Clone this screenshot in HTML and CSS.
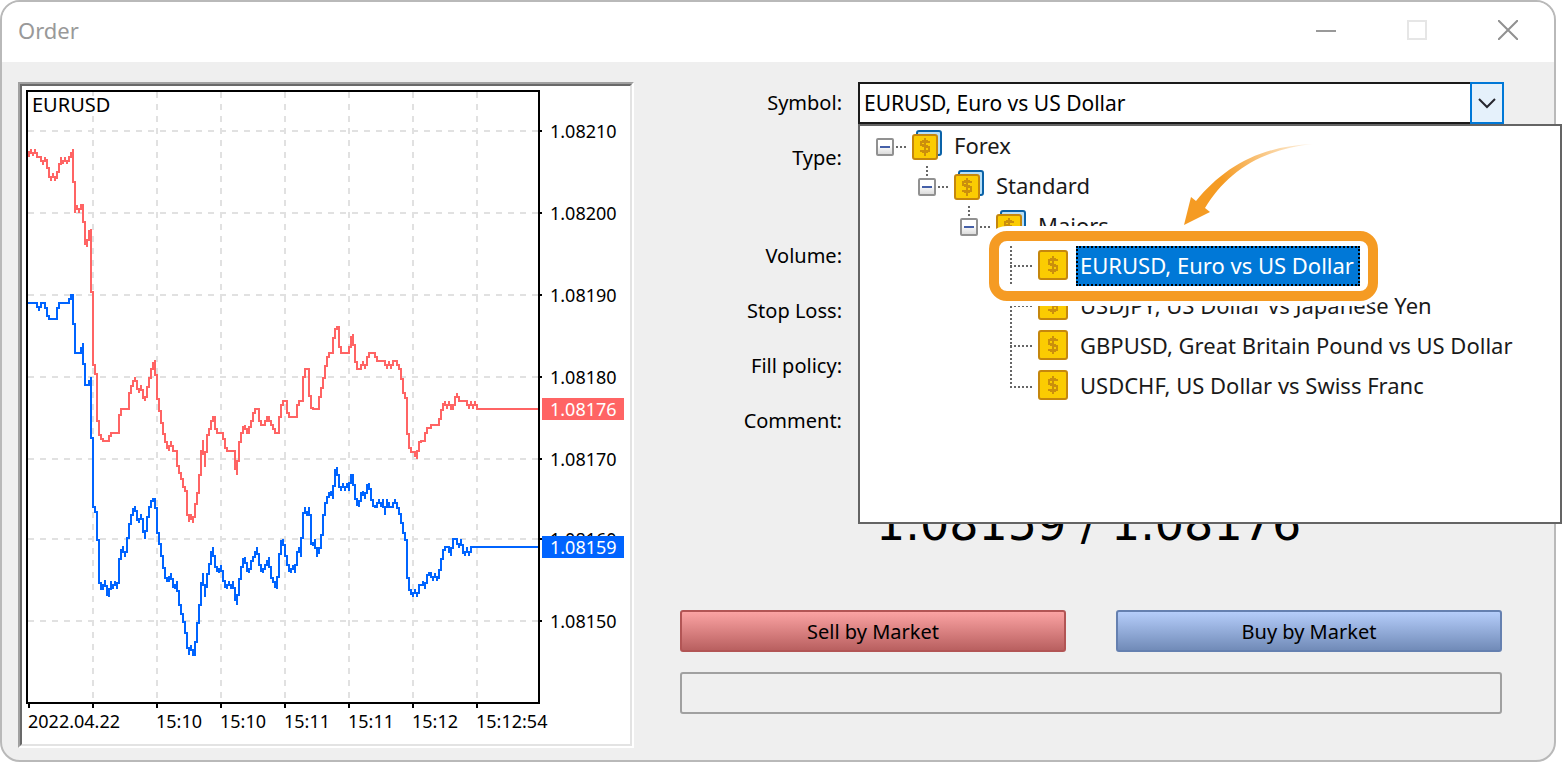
FILE: index.html
```html
<!DOCTYPE html>
<html lang="en">
<head>
<meta charset="utf-8">
<title>Order</title>
<link rel="stylesheet" href="styles.css">
</head>
<body>
<svg class="defs" aria-hidden="true">
  <defs>
    <g id="coin">
      <rect x="1" y="1" width="28" height="28" rx="2" fill="#fbcc02" stroke="#c5870d" stroke-width="2"/>
      <path d="M15 6v18M19 11v-1h-2v-1h-4v1h-2v4h2v1h4v1h2v4h-2v1h-4v-1h-2v-1" fill="none" stroke="#cb8f0c" stroke-width="2"/>
    </g>
    <g id="folder">
      <rect x="5" y="1" width="24" height="24" rx="2" fill="#b8e0f8" stroke="#0a62a8" stroke-width="2"/>
      <rect x="1" y="5" width="24" height="24" rx="2" fill="#fbcc02" stroke="#c5870d" stroke-width="2"/>
      <path d="M13 8v18M17 13v-1h-2v-1h-4v1h-2v3h2v1h4v1h2v4h-2v1h-4v-1h-2v-1" fill="none" stroke="#cb8f0c" stroke-width="2"/>
    </g>
  </defs>
</svg>
<main class="window">
  <header class="titlebar">
    <h1 class="title">Order</h1>
    <div class="window-buttons">
      <button class="window-button" aria-label="Minimize"><svg width="20" height="20"><path d="M0 11h20" stroke="#999" stroke-width="2"/></svg></button>
      <button class="window-button" aria-label="Maximize" disabled><svg width="20" height="20"><rect x="1" y="1" width="18" height="18" fill="none" stroke="#e6e6e6" stroke-width="2"/></svg></button>
      <button class="window-button" aria-label="Close"><svg width="20" height="20"><path d="M0 0l20 20M20 0L0 20" stroke="#919191" stroke-width="2"/></svg></button>
    </div>
  </header>
  <div class="content">
    <section class="chart-panel" aria-label="Tick chart">
      <svg class="chart" viewBox="22 86 608 658">
        <g class="grid">
          <path d="M93 92V702M157 92V702M221 92V702M285 92V702M349 92V702M413 92V702M477 92V702"/>
          <path d="M28 131H538M28 213H538M28 295H538M28 377H538M28 459H538M28 539H538M28 621H538"/>
        </g>
        <rect class="title-back" x="30" y="96" width="82" height="18"/>
        <path class="ask" data-ticks="28,156 29,155 31,149 33,156 35,149 37,156 39,157 41,157 43,165 45,157 47,162 49,173 51,181 53,173 55,181 57,174 59,170 61,157 63,164 65,157 67,164 69,158 71,156 73,149 73,181 75,183 75,213 77,205 79,213 81,205 83,205 83,221 85,223 85,241 87,247 89,233 91,229 91,291 93,293 93,357 95,373 97,375 97,409 99,432 101,437 103,441 109,441 109,439 111,433 119,433 119,421 121,409 129,409 129,399 131,387 133,384 135,377 137,385 139,393 141,385 143,395 145,401 147,392 149,382 151,373 153,365 155,360 155,373 157,376 157,393 159,405 161,417 163,429 165,438 167,445 169,451 171,441 173,450 177,451 177,460 179,471 181,474 183,484 185,490 187,492 187,507 189,522 191,514 193,523 195,510 197,498 199,487 201,462 203,440 205,467 207,436 209,433 211,425 213,417 215,417 215,424 217,433 223,433 225,445 227,451 235,451 235,463 237,475 239,447 241,436 243,429 245,425 247,433 249,433 249,429 251,425 253,417 255,409 259,409 259,417 261,425 265,425 267,417 269,417 271,424 273,425 275,433 279,433 279,425 281,408 283,401 287,401 287,409 289,417 297,417 297,409 299,401 303,401 303,384 305,369 309,369 309,386 311,406 313,409 319,409 319,400 321,393 323,383 325,372 327,360 329,353 333,353 333,344 335,331 337,327 339,327 339,340 341,353 349,353 351,340 353,334 355,355 357,369 361,369 363,361 365,369 367,361 369,353 375,353 377,361 385,361 387,369 389,361 391,369 393,361 397,361 399,368 401,370 403,388 405,397 407,399 407,422 409,445 411,451 415,452 417,459 419,443 421,441 425,441 425,435 427,431 431,425 439,425 441,413 443,406 445,401 447,409 449,401 451,409 453,409 455,400 457,393 459,401 467,401 469,409 471,401 473,409 475,401 477,409 539,409"/>
        <path class="bid" data-ticks="28,303 37,303 39,311 41,303 45,303 47,313 49,319 57,319 57,312 59,303 69,303 71,295 73,295 73,323 75,325 75,353 81,353 83,343 83,363 85,365 85,385 89,385 91,377 91,437 93,439 93,503 95,511 97,513 97,539 99,541 99,577 101,589 103,589 105,580 107,592 109,597 111,581 113,589 115,581 117,589 119,576 119,564 121,554 123,546 125,557 127,546 129,529 131,518 133,511 135,506 137,516 139,523 141,514 143,524 145,539 147,523 149,510 151,503 153,499 155,499 155,507 157,509 157,527 159,538 161,550 163,562 165,574 167,581 169,581 171,573 173,585 175,589 177,581 179,600 181,610 183,618 185,625 187,640 189,655 191,645 193,655 195,655 197,628 199,617 201,593 203,573 205,597 207,577 209,571 211,557 213,547 215,564 217,569 219,573 221,565 223,577 225,585 227,589 229,581 231,589 233,581 235,595 237,605 239,585 241,572 243,561 245,557 247,568 249,573 251,564 253,557 255,556 257,547 259,560 261,569 263,573 265,565 267,564 269,557 271,576 273,580 275,584 277,589 279,565 281,543 283,539 285,550 287,561 289,569 291,573 293,565 295,573 297,557 299,547 301,557 303,518 305,507 307,516 309,507 311,523 311,542 313,546 315,539 317,557 319,548 321,547 323,523 325,507 327,499 329,495 331,491 333,499 335,472 337,467 339,482 341,491 343,483 345,491 347,483 349,491 351,475 353,475 355,495 357,503 359,507 361,495 363,491 365,499 367,487 369,483 371,495 373,505 375,507 377,507 379,499 381,507 383,499 385,515 387,499 389,507 393,507 395,499 397,507 399,508 401,519 403,527 405,539 407,541 407,567 409,589 411,590 413,597 415,589 417,597 419,589 423,581 425,589 427,577 429,573 431,573 433,581 435,573 437,581 439,574 441,565 443,553 445,547 449,547 451,556 453,539 457,539 459,548 461,539 463,550 465,556 467,547 469,556 471,547 539,547"/>
        <path class="axis" d="M27 91H539V703H27ZM29 703v5M93 703v5M157 703v5M221 703v5M285 703v5M349 703v5M413 703v5M477 703v5M539 131h3M539 213h3M539 295h3M539 377h3M539 459h3M539 539h3M539 621h3"/>
        <g class="chart-text">
          <text class="chart-title" x="32" y="112">EURUSD</text>
          <text x="550" y="138">1.08210</text>
          <text x="550" y="220">1.08200</text>
          <text x="550" y="302">1.08190</text>
          <text x="550" y="384">1.08180</text>
          <text x="550" y="466">1.08170</text>
          <text x="550" y="546">1.08160</text>
          <text x="550" y="628">1.08150</text>
          <text x="28" y="728">2022.04.22</text>
          <text x="156" y="728">15:10</text>
          <text x="220" y="728">15:10</text>
          <text x="284" y="728">15:11</text>
          <text x="348" y="728">15:11</text>
          <text x="412" y="728">15:12</text>
          <text x="476" y="728">15:12:54</text>
          <rect class="ask-tag" x="542" y="398" width="82" height="22"/>
          <text class="tag-text" x="550" y="416">1.08176</text>
          <rect class="bid-tag" x="542" y="536" width="82" height="22"/>
          <text class="tag-text" x="550" y="554">1.08159</text>
        </g>
      </svg>
    </section>
    <form class="order-form">
      <div class="fields">
        <div class="field">
          <label for="symbol">Symbol:</label>
          <div class="combo">
            <select id="symbol"><option>EURUSD, Euro vs US Dollar</option></select>
            <span class="combo-arrow"><svg width="18" height="12" viewBox="0 0 18 12"><path d="M1 2l8 8 8-8" fill="none" stroke="#26262e" stroke-width="2"/></svg></span>
          </div>
        </div>
        <div class="field field-type"><label for="type">Type:</label><select id="type"></select></div>
        <div class="field field-volume"><label for="volume">Volume:</label><input id="volume" type="text"></div>
        <div class="field"><label for="stop">Stop Loss:</label><input id="stop" type="text"></div>
        <div class="field"><label for="fill">Fill policy:</label><select id="fill"></select></div>
        <div class="field"><label for="comment">Comment:</label><input id="comment" type="text"></div>
      </div>
      <div class="quote">1.08159 / 1.08176</div>
      <div class="actions">
        <button type="button" class="trade sell">Sell by Market</button>
        <button type="button" class="trade buy">Buy by Market</button>
      </div>
      <div class="status"></div>
    </form>
  </div>
</main>
<div class="popup">
  <ul class="tree">
    <li>
      <div class="node"><span class="toggle"></span><span class="link"></span><svg class="icon"><use href="#folder"/></svg><span class="name">Forex</span></div>
      <ul>
        <li>
          <div class="node child"><span class="toggle"></span><span class="link"></span><svg class="icon"><use href="#folder"/></svg><span class="name">Standard</span></div>
          <ul>
            <li>
              <div class="node child"><span class="toggle"></span><span class="link"></span><svg class="icon"><use href="#folder"/></svg><span class="name">Majors</span></div>
              <ul class="leaves">
                <li class="leaf current"><span class="branch"></span><svg class="icon"><use href="#coin"/></svg><span class="name">EURUSD, Euro vs US Dollar</span></li>
                <li class="leaf"><span class="branch"></span><svg class="icon"><use href="#coin"/></svg><span class="name">USDJPY, US Dollar vs Japanese Yen</span></li>
                <li class="leaf"><span class="branch"></span><svg class="icon"><use href="#coin"/></svg><span class="name">GBPUSD, Great Britain Pound vs US Dollar</span></li>
                <li class="leaf"><span class="branch"></span><svg class="icon"><use href="#coin"/></svg><span class="name">USDCHF, US Dollar vs Swiss Franc</span></li>
              </ul>
            </li>
          </ul>
        </li>
      </ul>
    </li>
  </ul>
  <svg class="pointer" width="132" height="84" viewBox="1182 142 132 84" aria-hidden="true">
    <defs><linearGradient id="fade" gradientUnits="userSpaceOnUse" x1="1312" y1="144" x2="1222" y2="180"><stop offset="0" stop-color="#f59b23" stop-opacity="0.1"/><stop offset="1" stop-color="#f59b23"/></linearGradient></defs>
    <path d="M1313 144C1260 146 1224 167 1196 201L1191 197 1184 225 1210 212 1205 208C1226 174 1258 150 1313 144Z" fill="url(#fade)"/>
  </svg>
</div>
<script src="chart.js"></script>
</body>
</html>
```
FILE: chart.js
```js
// Turns each list of ticks into a stepped line of vertical and horizontal runs.
document.querySelectorAll("[data-ticks]").forEach((path) => {
  const ticks = path.dataset.ticks.split(" ").map((pair) => pair.split(",").map(Number));
  let d = "M" + ticks[0].join(" ");
  for (let i = 1; i < ticks.length; i++) {
    const [x, y] = ticks[i];
    const previous = ticks[i - 1][1];
    d += `V${Math.round((previous + y) / 2)}H${x}V${y}`;
  }
  path.setAttribute("d", d);
});
```
FILE: styles.css
```css
* {
  box-sizing: border-box;
}

body {
  margin: 0;
  position: relative;
  background: #fff;
  color: #000;
  font-family: "Noto Sans", "Open Sans", sans-serif;
  font-size: 20px;
  line-height: 24px;
}

ul {
  margin: 0;
  padding: 0;
  list-style: none;
}

.defs {
  position: absolute;
  width: 0;
  height: 0;
}

.window {
  display: flex;
  flex-direction: column;
  min-height: 100vh;
  margin-right: 6px;
  border: 2px solid #b9b9b9;
  border-radius: 20px;
  background: #efefef;
  overflow: hidden;
}

.titlebar {
  display: flex;
  align-items: center;
  justify-content: space-between;
  height: 60px;
  padding: 0 36px 4px 16px;
  background: #fff;
}

.title {
  margin: 0;
  color: #999;
  font-size: 22px;
  font-weight: 400;
}

.window-buttons {
  display: flex;
  gap: 71px;
}

.window-button {
  display: flex;
  padding: 0;
  border: 0;
  background: none;
}

.content {
  display: flex;
  align-items: flex-start;
  padding: 20px 50px 12px 16px;
  gap: 46px;
}

.chart-panel {
  flex: none;
  width: 616px;
  border: 2px solid;
  border-color: #a0a0a0 #fff #fff #a0a0a0;
}

.chart {
  display: block;
  width: 100%;
  border: 2px solid;
  border-color: #696969 #e3e3e3 #e3e3e3 #696969;
  background: #fff;
  fill: none;
  stroke-width: 2;
  shape-rendering: crispEdges;
}

.grid {
  stroke: #e1e1e1;
  stroke-dasharray: 6 6;
}

.title-back {
  fill: #fff;
}

.ask {
  stroke: #ff6464;
}

.bid {
  stroke: #0064ff;
}

.axis {
  stroke: #000;
}

.chart-text {
  fill: #000;
  font-size: 18px;
}

.chart-title {
  font-size: 20px;
}

.ask-tag {
  fill: #ff6464;
}

.bid-tag {
  fill: #0064ff;
}

.tag-text {
  fill: #fff;
}

.order-form {
  flex: 1;
}

.fields {
  display: flex;
  flex-direction: column;
  gap: 13px;
}

.field {
  display: grid;
  grid-template-columns: 162px 1fr;
  column-gap: 16px;
  align-items: center;
  height: 42px;
}

.field-volume {
  margin-top: 43px;
}

.field label {
  text-align: right;
  white-space: nowrap;
}

.field input,
.field select {
  width: 100%;
  height: 42px;
  border: 2px solid #7a7a7a;
  background: #fff;
}

.combo {
  position: relative;
}

.combo select {
  appearance: none;
  display: block;
  padding: 0 36px 0 4px;
  border-color: #1a1a1a;
  border-radius: 0;
  color: #000;
  font: inherit;
  font-size: 21px;
}

.combo-arrow {
  position: absolute;
  top: 0;
  right: 0;
  bottom: 0;
  display: flex;
  align-items: center;
  justify-content: center;
  width: 34px;
  border: 2px solid #0078d7;
  background: #e5f1fb;
  pointer-events: none;
}

.quote {
  margin-top: 56px;
  padding-left: 196px;
  font-family: "DejaVu Sans", sans-serif;
  font-size: 46px;
  line-height: 52px;
  white-space: nowrap;
}

.actions {
  display: grid;
  grid-template-columns: 1fr 1fr;
  gap: 50px;
  margin: 60px 2px 20px 0;
}

.trade {
  height: 42px;
  padding: 2px 0 0;
  border: 2px solid;
  border-radius: 3px;
  color: #000;
  font: inherit;
}

.sell {
  border-color: #b25555;
  background: linear-gradient(#fba3a3, #b96060);
}

.buy {
  border-color: #6580b0;
  background: linear-gradient(#b5cdfa, #718bb8);
}

.status {
  height: 42px;
  margin-right: 2px;
  border: 2px solid #a0a0a0;
  border-radius: 3px;
}

.popup {
  position: absolute;
  top: 124px;
  left: 858px;
  right: 0;
  height: 400px;
  border: 2px solid #646464;
  background: #fff;
}

.tree {
  padding-left: 16px;
  color: #1a1a1a;
  font-size: 22px;
  white-space: nowrap;
}

.tree ul {
  padding-left: 42px;
}

.node,
.leaf {
  display: flex;
  align-items: center;
  width: fit-content;
  height: 40px;
}

.node {
  position: relative;
}

.toggle {
  width: 18px;
  height: 18px;
  margin-top: 2px;
  border: 2px solid #919191;
  border-radius: 2px;
  background:
    linear-gradient(#4560a8, #4560a8) center / 10px 2px no-repeat,
    linear-gradient(#fff 40%, #dcdcdc);
}

.child::before {
  content: "";
  position: absolute;
  top: 0;
  left: 8px;
  width: 2px;
  height: 10px;
  background: repeating-linear-gradient(#666 0 2px, transparent 2px 4px);
}

.link {
  width: 10px;
  height: 2px;
  margin: 2px 6px 0 2px;
  background: repeating-linear-gradient(90deg, #666 0 2px, transparent 2px 4px);
}

.icon {
  width: 30px;
  height: 30px;
  margin-bottom: 2px;
}

.name {
  padding: 0 4px 2px;
  margin-left: 8px;
}

.tree .leaves {
  padding-left: 50px;
}

.branch {
  align-self: stretch;
  width: 22px;
  margin-right: 6px;
  background:
    repeating-linear-gradient(#666 0 2px, transparent 2px 4px) left / 2px 100% no-repeat,
    repeating-linear-gradient(90deg, #666 0 2px, transparent 2px 4px) left center / 22px 2px no-repeat;
}

.leaf:last-child .branch {
  height: 22px;
  align-self: flex-start;
  background-position: left, left bottom;
}

.current {
  position: relative;
  z-index: 1;
}

.current::before {
  content: "";
  position: absolute;
  z-index: -1;
  inset: -15px -18px -15px -21px;
  border: 10px solid #f59b23;
  border-radius: 18px;
  background: #fff;
  box-shadow: 0 0 0 5px #fff;
}

.current .name {
  padding: 5px 4px 7px 2px;
  border: 2px dotted #000;
  background: #0078d7;
  color: #fff;
}

.pointer {
  position: absolute;
  top: 16px;
  left: 322px;
}
```
